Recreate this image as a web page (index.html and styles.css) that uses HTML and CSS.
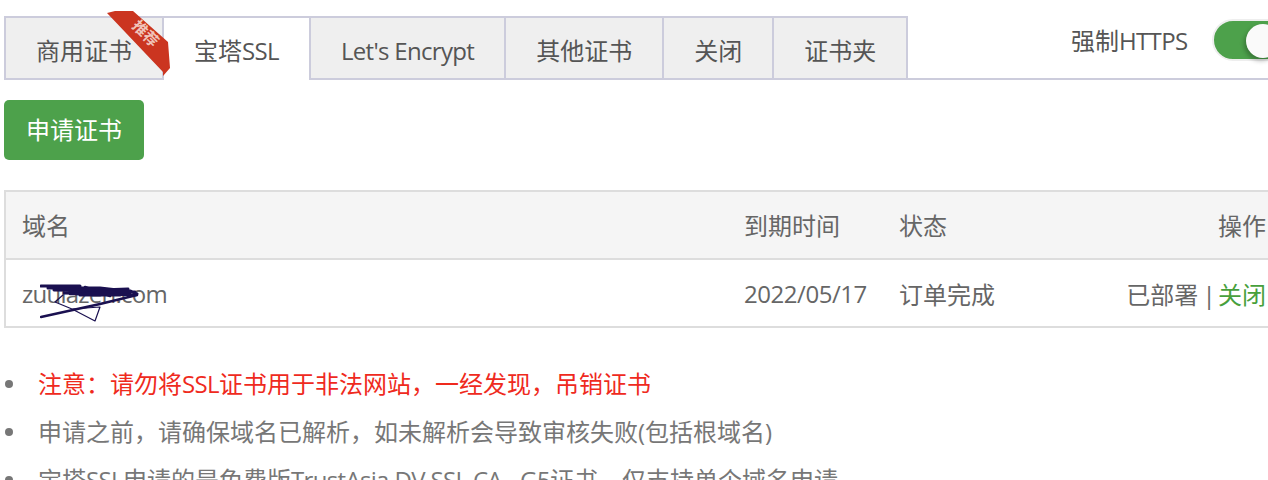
FILE: index.html
```html
<!DOCTYPE html>
<html lang="zh">
<head>
<meta charset="utf-8">
<title>SSL</title>
<link rel="stylesheet" href="styles.css">
</head>
<body>
<div class="page">
  <div class="tabbar">
    <ul class="tabs">
      <li class="tab">商用证书</li>
      <li class="tab active">宝塔<span class="lat">SSL</span></li>
      <li class="tab"><span class="lat encrypt">Let's Encrypt</span></li>
      <li class="tab">其他证书</li>
      <li class="tab">关闭</li>
      <li class="tab">证书夹</li>
    </ul>
    <svg class="ribbon" width="66" height="70" viewBox="0 0 66 70">
      <polygon points="1,3 9,1 27,1 62,32 64,58 57,66 57,62" fill="#cb3520"/>
    </svg>
    <span class="ribbon-text">推荐</span>
    <div class="https">
      <span class="https-label">强制<span class="lat">HTTPS</span></span>
      <span class="toggle"><span class="knob"></span></span>
    </div>
  </div>
  <button class="apply">申请证书</button>
  <table class="certs">
    <thead>
      <tr><th class="c-domain">域名</th><th class="c-date">到期时间</th><th class="c-status">状态</th><th class="c-op">操作</th></tr>
    </thead>
    <tbody>
      <tr>
        <td class="c-domain"><span class="lat tight">zuulazen.com</span></td>
        <td><span class="lat date">2022/05/17</span></td>
        <td>订单完成</td>
        <td class="c-op">已部署<span class="sep"> | </span><a class="link">关闭</a></td>
      </tr>
    </tbody>
  </table>
  <svg class="scribble" width="110" height="42" viewBox="0 0 110 42" fill="none" stroke="#1a1050" stroke-linecap="round" stroke-linejoin="round">
    <path d="M1 2 L40 2 M8 4 L60 4 L95 8 M14 6 L90 7 L97 10 M24 9 L90 10 M34 7 L88 5 M40 11 L80 11" stroke-width="3"/>
    <path d="M20 4 L75 8 L30 10 L96 11 M45 3 L70 12" stroke-width="2.6"/>
    <path d="M97 11 L60 20 L1 33" stroke-width="2.4"/>
    <path d="M32 25 L60 23 L55 37 L32 25 L15 18 L23 11" stroke-width="1.2"/>
  </svg>
  <ul class="notes">
    <li><span class="warn">注意：请勿将<span class="lat">SSL</span>证书用于非法网站，一经发现，吊销证书</span></li>
    <li><span>申请之前，请确保域名已解析，如未解析会导致审核失败(包括根域名)</span></li>
    <li><span>宝塔<span class="lat">SSL</span>申请的是免费版<span class="lat">TrustAsia DV SSL CA - G5</span>证书，仅支持单个域名申请</span></li>
  </ul>
</div>
</body>
</html>
```
FILE: styles.css
```css
* { box-sizing: border-box; }
html, body { margin: 0; height: 480px; overflow: hidden; background: #fff; }
body { font-family: "Open Sans", "Noto Sans CJK SC", sans-serif; font-size: 24px; color: #666; }
.page { position: relative; width: 1280px; padding: 16px 0 0 4px; }
.lat { letter-spacing: -.65px; }
.lat.tight { letter-spacing: -.75px; }
.lat.encrypt { letter-spacing: -.68px; }
.lat.date { letter-spacing: -.45px; }
.tabbar { position: relative; height: 64px; border-bottom: 2px solid #ccccdc; }
.tabs { display: flex; margin: 0; padding: 0; list-style: none; width: max-content; }
.tab { height: 62px; line-height: 66px; padding: 0 30px; color: #555; background: #efefef; border: 2px solid #ccccdc; border-left-width: 0; border-bottom-width: 0; white-space: nowrap; }
.tab:first-child { border-left-width: 2px; }
.tab.active { background: #fff; height: 64px; }
.ribbon { position: absolute; left: 102px; top: -6px; }
.ribbon-text { position: absolute; left: 127px; top: 7px; font-size: 15px; line-height: 20px; color: #f0c4ba; font-weight: 700; white-space: nowrap; transform: rotate(45deg); }
.https { position: absolute; left: 1067px; top: 2px; display: flex; align-items: center; gap: 25px; white-space: nowrap; }
.https-label { color: #555; line-height: 40px; margin-top: 3px; }
.toggle { position: relative; display: block; width: 80px; height: 42px; border-radius: 21px; background: #4da14b; border: 2px solid #eee; }
.knob { position: absolute; left: 32px; top: 3px; width: 34px; height: 34px; border-radius: 50%; background: #fafafa; box-shadow: -2px 3px 4px rgba(0,0,0,.25); }
.apply { display: block; width: 140px; height: 60px; margin: 20px 0 30px; padding: 0 0 3px; border: 0; border-radius: 5px; background: #4da14b; color: #fff; font: inherit; }
.certs { width: 1280px; border-collapse: separate; border-spacing: 0; table-layout: fixed; border: 2px solid #ddd; }
.certs th, .certs td { padding: 0 16px; text-align: left; font-weight: 400; color: #666; white-space: nowrap; }
.certs th { height: 68px; padding-bottom: 2px; background: #f5f5f5; border-bottom: 2px solid #ddd; }
.certs td { height: 66px; }
.c-domain { width: 722px; }
.c-date { width: 155px; }
.c-status { width: 160px; }
.certs .c-op { text-align: right; }
.sep { letter-spacing: -2px; }
.link { color: #47a03c; }
.scribble { position: absolute; left: 40px; top: 284px; }
.notes { margin: 32px 0 0; padding: 0 0 0 1px; color: #777; list-style: none; }
.notes li { display: flex; align-items: center; gap: 25px; line-height: 48px; white-space: nowrap; }
.notes li::before { content: ""; width: 8px; height: 8px; border-radius: 50%; background: #777; }
.warn { color: #ef2a1d; }
```
